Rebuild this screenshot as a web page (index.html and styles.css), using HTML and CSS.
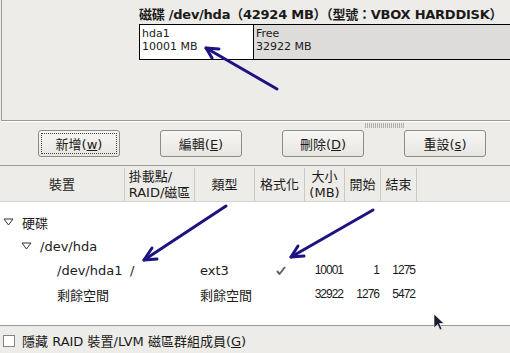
FILE: index.html
```html
<!DOCTYPE html>
<html lang="zh-Hant">
<head>
    <meta charset="UTF-8">
    <title>分割磁碟</title>
    <link rel="stylesheet" href="styles.css">
</head>
<body>
    <div class="page">
        <div class="disk-panel">
            <div class="disk-title">磁碟 /dev/hda（42924 MB）（型號：VBOX HARDDISK）</div>
            <div class="disk-bar">
                <div class="seg seg-used">
                    <span>hda1</span>
                    <span>10001 MB</span>
                </div>
                <div class="seg seg-free">
                    <span>Free</span>
                    <span>32922 MB</span>
                </div>
            </div>
        </div>

        <div class="toolbar">
            <div class="grip"></div>
            <div class="buttons">
                <button class="btn focused">新增(<u>w</u>)</button>
                <button class="btn">編輯(<u>E</u>)</button>
                <button class="btn">刪除(<u>D</u>)</button>
                <button class="btn">重設(<u>s</u>)</button>
            </div>
        </div>

        <div class="table">
            <div class="thead">
                <div class="th">裝置</div>
                <div class="th"><span class="th-text">掛載點/<br>RAID/磁區</span></div>
                <div class="th">類型</div>
                <div class="th">格式化</div>
                <div class="th"><span class="th-text center">大小<br>(MB)</span></div>
                <div class="th">開始</div>
                <div class="th">結束</div>
                <div class="th last"></div>
            </div>
            <div class="tbody">
                <div class="row">
                    <div class="cell name level0">
                        <svg class="expander" width="11" height="8" viewBox="0 0 11 8"><polygon points="1,1 10,1 5.5,7" /></svg>
                        硬碟
                    </div>
                </div>
                <div class="row">
                    <div class="cell name level1">
                        <svg class="expander" width="11" height="8" viewBox="0 0 11 8"><polygon points="1,1 10,1 5.5,7" /></svg>
                        /dev/hda
                    </div>
                </div>
                <div class="row">
                    <div class="cell name level2">/dev/hda1</div>
                    <div class="cell">/</div>
                    <div class="cell">ext3</div>
                    <div class="cell check">
                        <svg width="10" height="9" viewBox="0 0 10 9"><path d="M1 5 L3.5 8 L9 1" /></svg>
                    </div>
                    <div class="cell num">10001</div>
                    <div class="cell num">1</div>
                    <div class="cell num">1275</div>
                </div>
                <div class="row">
                    <div class="cell name level2">剩餘空間</div>
                    <div class="cell"></div>
                    <div class="cell">剩餘空間</div>
                    <div class="cell"></div>
                    <div class="cell num">32922</div>
                    <div class="cell num">1276</div>
                    <div class="cell num">5472</div>
                </div>
            </div>
        </div>

        <div class="footer">
            <span class="checkbox"></span>
            <span class="footer-label">隱藏 RAID 裝置/LVM 磁區群組成員(<u>G</u>)</span>
        </div>

        <!-- annotation arrows drawn over the screenshot -->
        <svg class="annotations" width="510" height="353" viewBox="0 0 510 353">
            <g class="arrow">
                <line x1="277" y1="89" x2="206" y2="48" />
                <polyline points="212,58 206,48 219,49" />
            </g>
            <g class="arrow">
                <line x1="226" y1="206" x2="144" y2="260" />
                <polyline points="152,248 144,260 157,259" />
            </g>
            <g class="arrow">
                <line x1="373" y1="210" x2="291" y2="257" />
                <polyline points="298,246 291,257 304,256" />
            </g>
            <path class="cursor" d="M434 314 L434 328 L437.5 324.5 L440 330 L442 329 L439.5 323.5 L444 323.5 Z" />
        </svg>
    </div>
</body>
</html>
```

FILE: styles.css
```css
body {
    margin: 0;
    font-family: 'DejaVu Sans', 'Noto Sans CJK TC', sans-serif;
    font-size: 13px;
    color: #1a1a1a;
    background-color: #edece8;
}
.page {
    position: relative;
    width: 510px;
    height: 353px;
    overflow: hidden;
}
.disk-panel {
    margin-left: 1px;
    width: 508px;
    height: 120px;
    border-left: 1px solid #9c9a94;
    border-bottom: 1px solid #9c9a94;
    box-shadow: 0 1px 0 #ffffff;
}
.disk-title {
    padding: 6px 0 0 137px;
    height: 17px;
    font-weight: bold;
    font-size: 13px;
    line-height: 17px;
    letter-spacing: -0.25px;
    white-space: nowrap;
}
.disk-bar {
    display: flex;
    margin: 1px 0 0 137px;
    height: 34px;
    border: 1px solid #000;
    border-right: none;
}
.seg {
    display: flex;
    flex-direction: column;
    padding: 2px 0 0 2px;
    font-size: 11px;
    line-height: 13px;
}
.seg-used {
    width: 111px;
    background-color: #fff;
    border-right: 1px solid #000;
}
.seg-free {
    flex: 1;
    background-color: #dddcda;
}
.toolbar {
    height: 42px;
}
.grip {
    margin: 2px 0 0 365px;
    width: 40px;
    height: 5px;
    background: repeating-linear-gradient(90deg, #b0ada6 0 1px, transparent 1px 2px);
}
.buttons {
    display: flex;
    gap: 40px;
    margin-top: 2px;
    padding-left: 38px;
}
.btn {
    position: relative;
    width: 82px;
    height: 27px;
    padding: 0;
    border: 1px solid #8e8c86;
    border-radius: 3px;
    background: linear-gradient(#f7f6f4, #e8e6e1);
    font-family: 'DejaVu Sans', 'Noto Sans CJK TC', sans-serif;
    font-size: 13px;
    color: #1a1a1a;
}
.btn.focused {
    outline: 1px dotted #444;
    outline-offset: -4px;
}
.btn u {
    text-underline-offset: 1px;
}
.table {
    border-top: 1px solid #9c9a94;
}
.thead,
.row {
    display: grid;
    grid-template-columns: 125px 70px 60px 50px 40px 36px 36px 1fr;
}
.thead {
    height: 35px;
    border-bottom: 1px solid #d6d3cc;
}
.th {
    display: flex;
    align-items: center;
    justify-content: center;
    border-right: 1px solid #ccc9c1;
    font-size: 13px;
    line-height: 16px;
    margin-top: 2px;
}
.th.last {
    border-right: none;
}
.th-text {
    text-align: left;
}
.th-text.center {
    text-align: center;
}
.tbody {
    height: 115px;
    padding-top: 8px;
    background-color: #fff;
}
.row {
    height: 24px;
    align-items: center;
}
.cell {
    padding-left: 5px;
    white-space: nowrap;
}
.cell.name {
    display: flex;
    align-items: center;
    gap: 8px;
}
.level0 {
    padding-left: 3px;
}
.level1 {
    padding-left: 21px;
}
.level2 {
    padding-left: 57px;
}
.expander polygon {
    fill: none;
    stroke: #333;
    stroke-width: 1;
}
.check {
    display: flex;
    justify-content: center;
    padding-left: 2px;
}
.check path {
    fill: none;
    stroke: #666;
    stroke-width: 2;
}
.num {
    padding: 0 2px 0 0;
    text-align: right;
    font-family: 'Liberation Sans', sans-serif;
    font-size: 12px;
    letter-spacing: -1px;
}
.footer {
    display: flex;
    align-items: center;
    gap: 7px;
    height: 29px;
    padding-left: 3px;
    border-top: 1px solid #9c9a94;
}
.checkbox {
    width: 10px;
    height: 10px;
    border: 1px solid #85837e;
    background-color: #fff;
}
.annotations {
    position: absolute;
    left: 0;
    top: 0;
    pointer-events: none;
}
.arrow line,
.arrow polyline {
    fill: none;
    stroke: #1d1282;
    stroke-width: 3;
    stroke-linecap: round;
    stroke-linejoin: round;
}
.cursor {
    fill: #1c1c33;
    stroke: #fff;
    stroke-width: 0.6;
}
```
